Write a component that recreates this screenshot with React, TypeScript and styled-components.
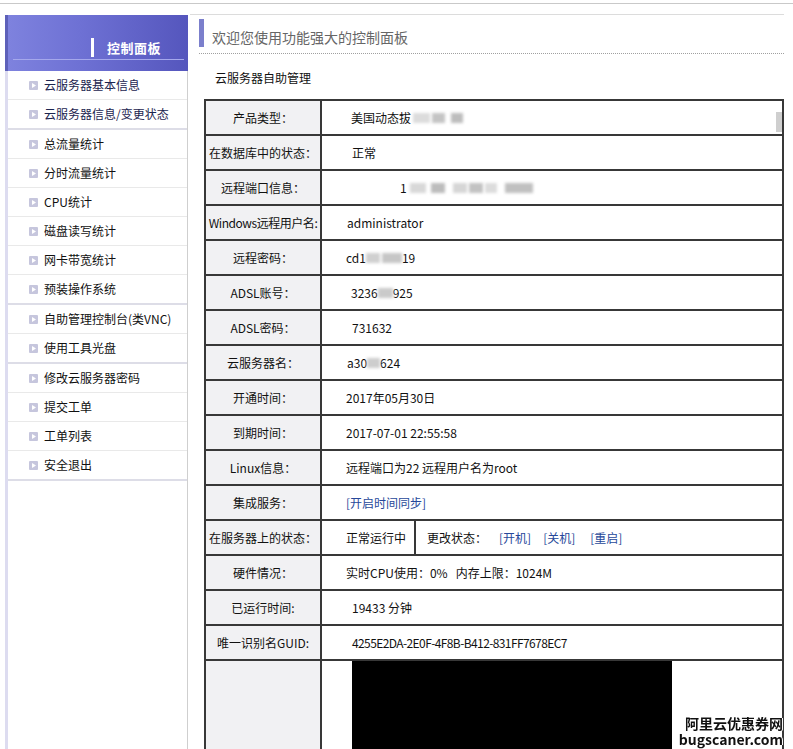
import React from "react";
import styled, { createGlobalStyle } from "styled-components";

const GlobalStyle = createGlobalStyle`
  html, body { margin: 0; padding: 0; background: #fff; }
  body {
    font-family: "Noto Sans CJK SC", "Noto Sans", sans-serif;
    font-size: 12px;
    color: #111;
  }
`;

const Page = styled.div`
  position: relative;
`;

const TopRule = styled.div`
  height: 1px;
  margin-top: 3px;
  background: #c9c9c9;
`;

const Layout = styled.div`
  display: flex;
  align-items: stretch;
  padding-left: 5px;
  margin-top: 10px;
`;

const Sidebar = styled.aside`
  width: 183px;
  flex: 0 0 183px;
  margin-top: 1px;
  display: flex;
  flex-direction: column;
`;

const SideHeader = styled.div`
  height: 56px;
  box-sizing: border-box;
  border-left: 3px solid #5d60b9;
  background: linear-gradient(90deg, #7e82de 0%, #6e71d4 40%, #5556bd 100%);
  display: flex;
  flex-direction: column;
`;

const HeaderRow = styled.div`
  margin-top: 23px;
  height: 19px;
  display: flex;
  align-items: center;
  padding-left: 83px;
`;

const HeaderBar = styled.span`
  width: 3px;
  height: 19px;
  background: #fff;
`;

const HeaderTitle = styled.span`
  margin-left: 13px;
  color: #fff;
  font-weight: bold;
  font-size: 13px;
  letter-spacing: 0.5px;
  line-height: 19px;
`;

const HeaderLine = styled.div`
  margin: 2px 4px 0 5px;
  height: 1px;
  background: #a5a8ec;
`;

const SideMenu = styled.nav`
  flex: 1;
  border-left: 3px solid #dddcf0;
  border-right: 1px solid #cfcfcf;
  background: #fff;
`;

const MenuItem = styled.div<{ $groupEnd?: boolean; $navy?: boolean }>`
  height: 28px;
  display: flex;
  align-items: center;
  gap: 6px;
  padding-left: 21px;
  border-bottom: ${(p) => (p.$groupEnd ? "2px solid #dddde7" : "1px solid #e9e9e9")};
  color: ${(p) => (p.$navy ? "#1c2550" : "#111")};
  white-space: nowrap;
  line-height: 16px;
`;

const Main = styled.main`
  flex: 1;
  min-width: 0;
  margin-left: 2px;
  margin-right: 9px;
  border-top: 1px solid #dcdcdc;
`;

const TitleBlock = styled.div`
  margin: 4px 0 0 9px;
  height: 28px;
  padding-bottom: 6px;
  border-bottom: 1px dotted #a0a0a0;
  display: flex;
`;

const TitleMark = styled.span`
  width: 5px;
  background: #7b7fcc;
`;

const TitleText = styled.h1`
  margin: 8px 0 0 8px;
  font-size: 14px;
  font-weight: normal;
  line-height: 20px;
  color: #666;
`;

const SectionLabel = styled.div`
  margin: 14px 0 0 25px;
  line-height: 20px;
`;

const Table = styled.div`
  margin: 11px 0 0 14px;
  border: 2px solid #383838;
  border-bottom: none;
`;

const Row = styled.div<{ $tall?: boolean }>`
  display: grid;
  grid-template-columns: 116px 1fr;
  height: ${(p) => (p.$tall ? "220px" : "35px")};
  box-sizing: border-box;
  border-bottom: 2px solid #383838;
`;

const Label = styled.div<{ $squeeze?: boolean }>`
  background: #f1f1f3;
  border-right: 2px solid #383838;
  display: flex;
  align-items: center;
  justify-content: center;
  white-space: nowrap;
  overflow: hidden;
  letter-spacing: ${(p) => (p.$squeeze ? "-0.45px" : "0")};
`;

const Value = styled.div<{ $indent?: number }>`
  position: relative;
  display: flex;
  align-items: center;
  padding-left: ${(p) => 24 + (p.$indent || 0)}px;
  white-space: nowrap;
  overflow: hidden;
`;

const Mono = styled.span<{ $tight?: boolean }>`
  letter-spacing: ${(p) => (p.$tight ? "-0.6px" : "0")};
`;

const Smudge = styled.span<{ $w: number; $tone?: string; $gap?: number }>`
  display: inline-block;
  width: ${(p) => p.$w}px;
  height: 10px;
  margin-left: ${(p) => p.$gap || 0}px;
  background: ${(p) => p.$tone || "#d2d2d2"};
  filter: blur(1.5px);
`;

const ScrollThumb = styled.span`
  position: absolute;
  right: 0;
  top: 11px;
  width: 6px;
  height: 20px;
  background: #cfcfcf;
`;

const StatusValue = styled.div`
  display: grid;
  grid-template-columns: 94px 1fr;
`;

const StatusCell = styled.div`
  display: flex;
  align-items: center;
  padding-left: 24px;
  border-right: 2px solid #383838;
  white-space: nowrap;
`;

const ActionCell = styled.div`
  display: flex;
  align-items: center;
  padding-left: 11px;
  white-space: nowrap;
`;

const Link = styled.a<{ $gap?: number }>`
  color: #27489a;
  text-decoration: none;
  margin-left: ${(p) => p.$gap || 0}px;
  cursor: pointer;
`;

const ScreenValue = styled.div`
  padding-left: 30px;
  display: flex;
  align-items: stretch;
`;

const Screen = styled.div`
  width: 320px;
  background: #000;
`;

const Watermark = styled.div`
  position: fixed;
  right: 10px;
  bottom: 2px;
  display: flex;
  flex-direction: column;
  align-items: flex-end;
  font-family: "Noto Sans CJK SC", "Noto Sans", sans-serif;
  font-weight: bold;
  font-size: 14px;
  color: #111;
  text-shadow: 1px 0 #fff, -1px 0 #fff, 0 1px #fff, 0 -1px #fff;
`;

const MarkLine = styled.div`
  height: 16px;
  line-height: 16px;
  overflow: visible;
`;

const MenuIcon = () => (
  <svg width="9" height="9" viewBox="0 0 9 9">
    <rect x="0" y="0" width="9" height="9" rx="1" fill="#c6c6dd" />
    <polygon points="3,2 7,4.5 3,7" fill="#fff" />
  </svg>
);

const menu: { text: string; end?: boolean; navy?: boolean }[] = [
  { text: "云服务器基本信息", navy: true },
  { text: "云服务器信息/变更状态", navy: true, end: true },
  { text: "总流量统计" },
  { text: "分时流量统计" },
  { text: "CPU统计" },
  { text: "磁盘读写统计" },
  { text: "网卡带宽统计" },
  { text: "预装操作系统", end: true },
  { text: "自助管理控制台(类VNC)" },
  { text: "使用工具光盘", end: true },
  { text: "修改云服务器密码" },
  { text: "提交工单" },
  { text: "工单列表" },
  { text: "安全退出", end: true },
];

export default function App() {
  return (
    <Page>
      <GlobalStyle />
      <TopRule />
      <Layout>
        <Sidebar>
          <SideHeader>
            <HeaderRow>
              <HeaderBar />
              <HeaderTitle>控制面板</HeaderTitle>
            </HeaderRow>
            <HeaderLine />
          </SideHeader>
          <SideMenu>
            {menu.map((m) => (
              <MenuItem key={m.text} $groupEnd={m.end} $navy={m.navy}>
                <MenuIcon />
                <span>{m.text}</span>
              </MenuItem>
            ))}
          </SideMenu>
        </Sidebar>
        <Main>
          <TitleBlock>
            <TitleMark />
            <TitleText>欢迎您使用功能强大的控制面板</TitleText>
          </TitleBlock>
          <SectionLabel>云服务器自助管理</SectionLabel>
          <Table>
            <Row>
              <Label>产品类型：</Label>
              <Value $indent={5}>
                美国动态拔
                <Smudge $w={17} $tone="#dcdcdc" $gap={2} />
                <Smudge $w={13} $tone="#c4c4c4" $gap={2} />
                <Smudge $w={12} $tone="#bdbdbd" $gap={6} />
                <ScrollThumb />
              </Value>
            </Row>
            <Row>
              <Label>在数据库中的状态：</Label>
              <Value $indent={6}>正常</Value>
            </Row>
            <Row>
              <Label>远程端口信息：</Label>
              <Value $indent={54}>
                1
                <Smudge $w={16} $tone="#d8d8d8" $gap={3} />
                <Smudge $w={14} $tone="#bcbcbc" $gap={5} />
                <Smudge $w={14} $tone="#d6d6d6" $gap={8} />
                <Smudge $w={14} $tone="#c2c2c2" $gap={2} />
                <Smudge $w={12} $tone="#dcdcdc" $gap={2} />
                <Smudge $w={28} $tone="#c0c0c0" $gap={8} />
              </Value>
            </Row>
            <Row>
              <Label $squeeze>Windows远程用户名:</Label>
              <Value $indent={1}>administrator</Value>
            </Row>
            <Row>
              <Label>远程密码：</Label>
              <Value>
                cd1
                <Smudge $w={14} $tone="#d0d0d0" $gap={0} />
                <Smudge $w={20} $tone="#c6c6c6" $gap={2} />
                19
              </Value>
            </Row>
            <Row>
              <Label>ADSL账号：</Label>
              <Value $indent={5}>
                3236
                <Smudge $w={15} $tone="#cacaca" />
                925
              </Value>
            </Row>
            <Row>
              <Label>ADSL密码：</Label>
              <Value $indent={6}>731632</Value>
            </Row>
            <Row>
              <Label>云服务器名：</Label>
              <Value $indent={1}>
                a30
                <Smudge $w={13} $tone="#cdcdcd" />
                624
              </Value>
            </Row>
            <Row>
              <Label>开通时间：</Label>
              <Value>2017年05月30日</Value>
            </Row>
            <Row>
              <Label>到期时间：</Label>
              <Value>2017-07-01 22:55:58</Value>
            </Row>
            <Row>
              <Label>Linux信息：</Label>
              <Value>远程端口为22 远程用户名为root</Value>
            </Row>
            <Row>
              <Label>集成服务：</Label>
              <Value>
                <Link>[开启时间同步]</Link>
              </Value>
            </Row>
            <Row>
              <Label>在服务器上的状态：</Label>
              <StatusValue>
                <StatusCell>正常运行中</StatusCell>
                <ActionCell>
                  更改状态：
                  <Link $gap={12}>[开机]</Link>
                  <Link $gap={12}>[关机]</Link>
                  <Link $gap={15}>[重启]</Link>
                </ActionCell>
              </StatusValue>
            </Row>
            <Row>
              <Label>硬件情况：</Label>
              <Value>实时CPU使用：0%&nbsp;&nbsp; 内存上限：1024M</Value>
            </Row>
            <Row>
              <Label>已运行时间:</Label>
              <Value $indent={6}>19433 分钟</Value>
            </Row>
            <Row>
              <Label>唯一识别名GUID:</Label>
              <Value $indent={6}>
                <Mono $tight>4255E2DA-2E0F-4F8B-B412-831FF7678EC7</Mono>
              </Value>
            </Row>
            <Row $tall>
              <Label />
              <ScreenValue>
                <Screen />
              </ScreenValue>
            </Row>
          </Table>
        </Main>
      </Layout>
      <Watermark>
        <MarkLine>阿里云优惠券网</MarkLine>
        <MarkLine>bugscaner.com</MarkLine>
      </Watermark>
    </Page>
  );
}
